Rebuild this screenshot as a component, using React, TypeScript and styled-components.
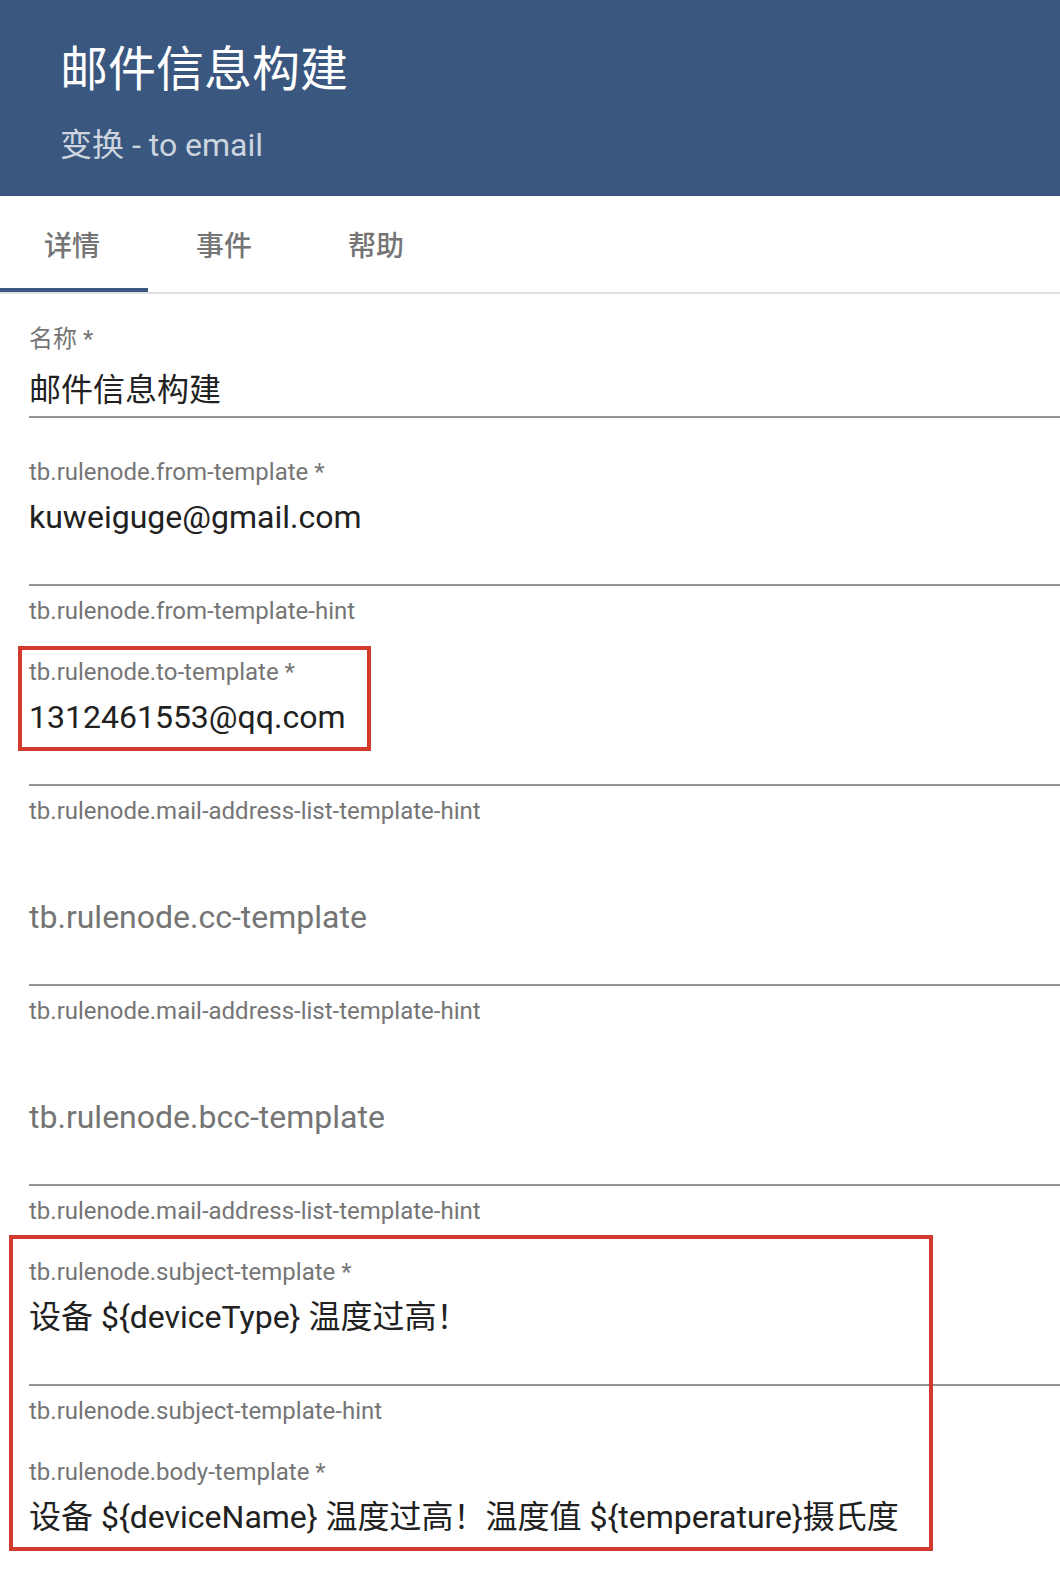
import React from "react";
import styled, { createGlobalStyle } from "styled-components";

const GlobalStyle = createGlobalStyle`
  html, body {
    margin: 0;
    padding: 0;
    background: #ffffff;
    overflow: hidden;
  }
  body {
    font-family: Roboto, "Noto Sans CJK SC", "Noto Sans", sans-serif;
    -webkit-font-smoothing: antialiased;
  }
  * { box-sizing: border-box; }
`;

const Page = styled.div`
  position: relative;
  width: 1060px;
  height: 1580px;
  background: #ffffff;
  overflow: hidden;
`;

const Header = styled.header`
  background: #3a5780;
  padding: 42px 0 31px 60px;
  display: flex;
  flex-direction: column;
`;

const Title = styled.h1`
  margin: 0;
  font-size: 48px;
  line-height: 56px;
  font-weight: 400;
  color: #ffffff;
`;

const Subtitle = styled.div`
  margin-top: 27px;
  font-size: 32px;
  line-height: 40px;
  color: rgba(255, 255, 255, 0.75);
`;

const TabBar = styled.nav`
  display: flex;
  gap: 4px;
  border-bottom: 2px solid #e0e0e0;
`;

const Tab = styled.div<{ $active?: boolean }>`
  width: 148px;
  height: 96px;
  padding-left: 44px;
  display: flex;
  align-items: center;
  font-size: 28px;
  font-weight: 500;
  color: #757575;
  box-shadow: ${(p) => (p.$active ? "inset 0 -4px 0 #3a5780" : "none")};
`;

const Form = styled.main`
  padding: 30px 0 40px 29px;
  display: flex;
  flex-direction: column;
`;

const Field = styled.section<{ $gap: number }>`
  display: flex;
  flex-direction: column;
  margin-bottom: ${(p) => p.$gap}px;
`;

const Label = styled.label`
  display: block;
  height: 30px;
  font-size: 24px;
  line-height: 30px;
  color: #757575;
  white-space: nowrap;
`;

const ValueArea = styled.div<{ $top: number; $bottom: number }>`
  padding-top: ${(p) => p.$top}px;
  padding-bottom: ${(p) => p.$bottom}px;
  border-bottom: 2px solid #949494;
`;

const Value = styled.div<{ $placeholder?: boolean }>`
  font-size: 32px;
  line-height: 40px;
  height: 40px;
  white-space: nowrap;
  color: ${(p) => (p.$placeholder ? "#757575" : "#212121")};
`;

const Hint = styled.div`
  margin-top: 10px;
  font-size: 24px;
  line-height: 30px;
  color: #757575;
  white-space: nowrap;
`;

const Highlight = styled.div`
  position: absolute;
  border: 4px solid #d23a2c;
  pointer-events: none;
`;

type FieldDef = {
  label?: string;
  value: string;
  placeholder?: boolean;
  hint?: string;
  compact?: boolean;
  gap: number;
};

const fields: FieldDef[] = [
  { label: "名称 *", value: "邮件信息构建", compact: true, gap: 39 },
  {
    label: "tb.rulenode.from-template *",
    value: "kuweiguge@gmail.com",
    hint: "tb.rulenode.from-template-hint",
    gap: 31,
  },
  {
    label: "tb.rulenode.to-template *",
    value: "1312461553@qq.com",
    hint: "tb.rulenode.mail-address-list-template-hint",
    gap: 31,
  },
  {
    value: "tb.rulenode.cc-template",
    placeholder: true,
    hint: "tb.rulenode.mail-address-list-template-hint",
    gap: 31,
  },
  {
    value: "tb.rulenode.bcc-template",
    placeholder: true,
    hint: "tb.rulenode.mail-address-list-template-hint",
    gap: 31,
  },
  {
    label: "tb.rulenode.subject-template *",
    value: "设备 ${deviceType} 温度过高！",
    hint: "tb.rulenode.subject-template-hint",
    gap: 31,
  },
  {
    label: "tb.rulenode.body-template *",
    value: "设备 ${deviceName} 温度过高！温度值 ${temperature}摄氏度",
    gap: 0,
  },
];

const highlights = [
  { left: 18, top: 646, width: 353, height: 105 },
  { left: 9, top: 1235, width: 924, height: 316 },
];

export default function App() {
  return (
    <Page>
      <GlobalStyle />
      <Header>
        <Title>邮件信息构建</Title>
        <Subtitle>变换 - to email</Subtitle>
      </Header>
      <TabBar>
        <Tab $active>详情</Tab>
        <Tab>事件</Tab>
        <Tab>帮助</Tab>
      </TabBar>
      <Form>
        {fields.map((f, i) => (
          <Field key={i} $gap={f.gap}>
            <Label>{f.label ?? ""}</Label>
            <ValueArea $top={f.compact ? 16 : 10} $bottom={f.compact ? 6 : 47}>
              <Value $placeholder={f.placeholder}>{f.value}</Value>
            </ValueArea>
            {f.hint && <Hint>{f.hint}</Hint>}
          </Field>
        ))}
      </Form>
      {highlights.map((h, i) => (
        <Highlight
          key={i}
          style={{ left: h.left, top: h.top, width: h.width, height: h.height }}
        />
      ))}
    </Page>
  );
}
